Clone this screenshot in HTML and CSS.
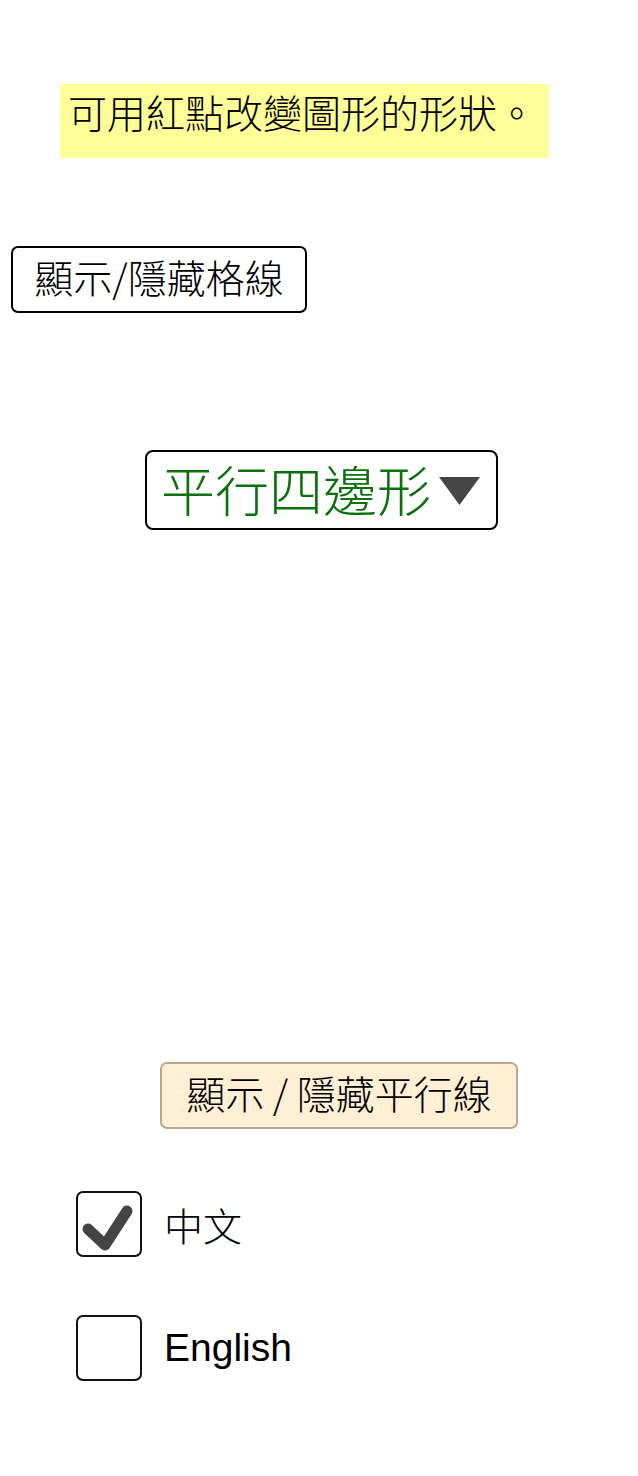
FILE: index.html
```html
<!DOCTYPE html>
<html>
<head>
    <meta charset="UTF-8">
    <meta name="viewport" content="width=device-width, initial-scale=1.0">
    <title>平行四邊形</title>
    <link rel="stylesheet" href="styles.css">
</head>
<body>
<div id="page">
    <p class="hint">可用紅點改變圖形的形狀。</p>

    <button class="grid-btn">顯示/隱藏格線</button>

    <div class="shape-select">
        <span class="shape-name">平行四邊形</span>
        <svg class="arrow" width="41" height="28" viewBox="0 0 41 28">
            <polygon points="0,0 41,0 20.5,28" fill="#444"/>
        </svg>
    </div>

    <button class="parallel-btn">顯示 / 隱藏平行線</button>

    <div class="lang-list">
        <label class="lang-item">
            <span class="box">
                <svg width="62" height="62" viewBox="0 0 62 62">
                    <polyline points="10,36 27,52 49,18" fill="none" stroke="#444" stroke-width="11" stroke-linecap="round" stroke-linejoin="round"/>
                </svg>
            </span>
            <span class="lang-text">中文</span>
        </label>
        <label class="lang-item">
            <span class="box"></span>
            <span class="lang-text">English</span>
        </label>
    </div>
</div>
</body>
</html>
```

FILE: styles.css
```css
body {
    margin: 0;
    font-family: "Liberation Sans", "Noto Sans CJK TC", sans-serif;
    font-size: 39px;
    font-weight: 300;
    color: #000;
    background: #fff;
}
#page {
    display: flex;
    flex-direction: column;
    align-items: flex-start;
    padding-top: 84px;
}
.hint {
    margin: 0 0 0 60px;
    width: 489px;
    height: 74px;
    box-sizing: border-box;
    padding: 0 8px;
    background-color: #ffff99;
    line-height: 62px;
}
button {
    font-family: "Noto Sans CJK TC", sans-serif;
    font-size: 39px;
    font-weight: 300;
    color: #000;
    cursor: pointer;
    box-sizing: border-box;
    padding: 0 0 8px 0;
}
.grid-btn {
    margin: 88px 0 0 11px;
    width: 296px;
    height: 67px;
    background-color: #fff;
    border: 2px solid #000;
    border-radius: 7px;
}
.shape-select {
    margin: 137px 0 0 145px;
    width: 353px;
    height: 80px;
    box-sizing: border-box;
    border: 2px solid #000;
    border-radius: 8px;
    display: flex;
    align-items: center;
    padding: 0 0 4px 14px;
}
.shape-name {
    color: #0c700c;
    font-size: 54px;
}
.arrow {
    margin-left: 8px;
    margin-top: 6px;
}
.parallel-btn {
    margin: 532px 0 0 160px;
    width: 358px;
    height: 67px;
    background-color: #ffefd5;
    border: 2px solid #b8aa92;
    border-radius: 7px;
}
.lang-list {
    margin: 62px 0 0 76px;
    display: flex;
    flex-direction: column;
    gap: 58px;
}
.lang-item {
    display: flex;
    align-items: center;
}
.box {
    width: 66px;
    height: 66px;
    box-sizing: border-box;
    border: 2px solid #111;
    border-radius: 7px;
    display: flex;
    align-items: center;
    justify-content: center;
}
.lang-text {
    margin-left: 22px;
}
```
